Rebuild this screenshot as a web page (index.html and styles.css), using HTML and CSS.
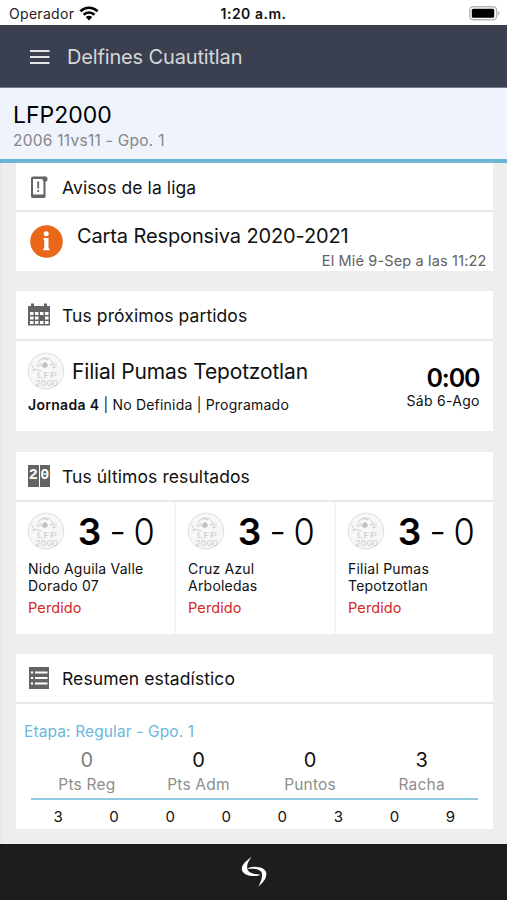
FILE: index.html
```html
<!DOCTYPE html>
<html lang="es">
<head>
<meta charset="utf-8">
<title>Delfines Cuautitlan</title>
<link rel="stylesheet" href="styles.css">
</head>
<body>
<svg width="0" height="0" class="defs" aria-hidden="true">
  <symbol id="crest" viewBox="0 0 38 38">
    <circle cx="19" cy="19" r="17.8" fill="#f7f7f7" stroke="#dedfe0" stroke-width="1"/>
    <g fill="none" stroke="#d2d4d5" stroke-width="1">
      <path d="M11 15a7.500 7.500 0 0 1 15-3l1 3M4 12l3 5 8 2M5 19l4-1M25 16l4-1v-4"/>
      <path d="M14 8l3-2 4 2M12 14l3-2M23 13l3-1" stroke-width="1.4"/>
    </g>
    <path d="M16 11l3-1 2 3-2 3-4-1z" fill="#bfc2c4"/>
  </symbol>
</svg>
<header class="status">
  <span class="carrier">Operador</span>
  <svg class="wifi" width="20" height="15" viewBox="0 0 20 15"><g fill="none" stroke="#000" stroke-width="2.7"><path d="M1.400 5.200a12.400 12.400 0 0 1 17.200 0M4.600 8.700a7.700 7.700 0 0 1 10.800 0"/></g><path d="M6.800 11a4.600 4.600 0 0 1 6.400 0L10 14.400z"/></svg>
  <span class="clock">1:20 a.m.</span>
  <svg class="battery" width="32" height="15" viewBox="0 0 32 15"><rect x=".7" y=".7" width="27" height="13" rx="3.5" fill="#fff" stroke="#b8b8b8" stroke-width="1.4"/><rect x="2.8" y="2.7" width="22.4" height="9" rx="1.5"/><path d="M29 5q3 2.3 0 4.6z" fill="#b8b8b8"/></svg>
</header>
<nav class="bar">
  <svg width="20" height="14" viewBox="0 0 20 14"><path d="M0 1h19.500M0 7h19.500M0 13h19.500" stroke="#e3e4e5" stroke-width="2"/></svg>
  <span class="bar-title">Delfines Cuautitlan</span>
</nav>
<section class="league">
  <h1>LFP2000</h1>
  <p>2006 11vs11 - Gpo. 1</p>
</section>
<main>
  <section class="card notices">
    <div class="card-head">
      <svg class="icon" width="24" height="24" viewBox="0 0 24 24"><path fill="#646464" fill-rule="evenodd" d="M6 1.500h12.500V21.500a1.500 1.500 0 0 1-1.500 1.500H5.500A1.500 1.500 0 0 1 4 21.500V3.500A2 2 0 0 1 6 1.500zM6 4v15.500h10.500V4z"/><circle cx="18" cy="4" r="2.600" fill="#646464"/><path d="M11.200 6.500v7" stroke="#646464" stroke-width="1.800"/><circle cx="11.200" cy="16" r="1.100" fill="#646464"/></svg>
      <h2>Avisos de la liga</h2>
    </div>
    <div class="notice">
      <svg width="33" height="33" viewBox="0 0 33 33"><circle cx="16.500" cy="16.500" r="16.300" fill="#ea6719"/><circle cx="16.200" cy="8.800" r="2.500" fill="#fff"/><path d="M13.500 13h5v10.500h1V25.300h-6.300v-1.800h1v-8.700h-.7z" fill="#fff"/></svg>
      <div class="notice-text">
        <h3>Carta Responsiva 2020-2021</h3>
        <time>El Mié 9-Sep a las 11:22</time>
      </div>
    </div>
  </section>
  <section class="card next">
    <div class="card-head">
      <svg class="icon" width="24" height="24" viewBox="0 0 24 24"><path fill="#646464" d="M1 3h22v19.500H1zM4 .500h3v4H4zM17 .500h3v4h-3z"/><path fill="#fff" d="M3 9h3.500v3H3zM8 9h3.500v3H8zM13 9h3.500v3H13zM18 9h3.500v3H18zM3 13.500h3.500v3H3zM8 13.500h3.500v3H8zM18 13.500h3.500v3H18zM3 18h3.500v3H3zM8 18h3.500v3H8zM13 18h3.500v3H13zM18 18h3.500v3H18z"/></svg>
      <h2>Tus próximos partidos</h2>
    </div>
    <div class="match">
      <div class="match-info">
        <div class="rival"><svg width="38" height="38"><use href="#crest"/><g class="crest-text"><text x="10" y="25.500" textLength="20" lengthAdjust="spacingAndGlyphs">LFP</text><text x="8" y="33.500" textLength="23" lengthAdjust="spacingAndGlyphs">2000</text></g></svg><h3>Filial Pumas Tepotzotlan</h3></div>
        <p><b>Jornada 4</b> | No Definida | Programado</p>
      </div>
      <div class="match-time"><strong>0:00</strong><span>Sáb 6-Ago</span></div>
    </div>
  </section>
  <section class="card results">
    <div class="card-head">
      <span class="icon score-icon"><i>2</i><i>0</i></span>
      <h2>Tus últimos resultados</h2>
    </div>
    <div class="result-row">
      <article class="result"><div class="score"><svg width="38" height="38"><use href="#crest"/><g class="crest-text"><text x="10" y="25.500" textLength="20" lengthAdjust="spacingAndGlyphs">LFP</text><text x="8" y="33.500" textLength="23" lengthAdjust="spacingAndGlyphs">2000</text></g></svg><b>3</b><em>-</em><span>0</span></div><p>Nido Aguila Valle<br>Dorado 07</p><small>Perdido</small></article>
      <article class="result"><div class="score"><svg width="38" height="38"><use href="#crest"/><g class="crest-text"><text x="10" y="25.500" textLength="20" lengthAdjust="spacingAndGlyphs">LFP</text><text x="8" y="33.500" textLength="23" lengthAdjust="spacingAndGlyphs">2000</text></g></svg><b>3</b><em>-</em><span>0</span></div><p>Cruz Azul<br>Arboledas</p><small>Perdido</small></article>
      <article class="result"><div class="score"><svg width="38" height="38"><use href="#crest"/><g class="crest-text"><text x="10" y="25.500" textLength="20" lengthAdjust="spacingAndGlyphs">LFP</text><text x="8" y="33.500" textLength="23" lengthAdjust="spacingAndGlyphs">2000</text></g></svg><b>3</b><em>-</em><span>0</span></div><p>Filial Pumas<br>Tepotzotlan</p><small>Perdido</small></article>
    </div>
  </section>
  <section class="card stats">
    <div class="card-head">
      <svg class="icon" width="24" height="24" viewBox="0 0 24 24"><path fill="#646464" d="M2 1h20v22H2z"/><path stroke="#fff" stroke-width="1.800" d="M3.800 6.500h2.400M8 6.500h12.500M3.800 12h2.400M8 12h12.500M3.800 17.500h2.400M8 17.500h12.500"/></svg>
      <h2>Resumen estadístico</h2>
    </div>
    <h4>Etapa: Regular - Gpo. 1</h4>
    <div class="totals">
      <div class="dim"><b>0</b><span>Pts Reg</span></div>
      <div><b>0</b><span>Pts Adm</span></div>
      <div><b>0</b><span>Puntos</span></div>
      <div><b>3</b><span>Racha</span></div>
    </div>
    <div class="detail"><span>3</span><span>0</span><span>0</span><span>0</span><span>0</span><span>3</span><span>0</span><span>9</span></div>
  </section>
</main>
<footer class="dock">
  <svg width="28" height="34" viewBox="0 0 28 34"><path fill="#fff" d="M11.500 2C6 6 1 10 2 15c.7 3.500 5 5.600 10 6 4 .3 7-.3 8.500-1.500C16 19.500 8 18.500 7.300 13.500 6.500 9.500 8.500 6 11.500 2zM18.500 31.500C24 27 27.500 21.500 26 17 24.800 13.500 20 12 15 11.800c-3.500-.1-6.500.7-7.500 2.300 5-1 14-.5 14.500 5 .3 4.500-1.500 8-3.500 12.400z"/></svg>
</footer>
</body>
</html>
```
FILE: styles.css
```css
* { box-sizing: border-box; margin: 0; padding: 0; }
body { width: 507px; height: 900px; overflow: hidden; display: flex; flex-direction: column; background: #eee; color: #111; font-family: Inter, "Liberation Sans", sans-serif; font-weight: 400; }
svg { display: block; flex: none; }
.defs { position: absolute; }
h1, h2, h3, h4 { font-weight: 400; white-space: nowrap; }
.status { height: 25px; flex: none; background: #fff; display: grid; grid-template-columns: auto 1fr auto; align-items: center; padding: 2px 6px 0 9px; position: relative; }
.carrier { font-size: 14px; letter-spacing: .3px; color: #222; }
.wifi { margin-left: 5px; }
.clock { position: absolute; left: 0; right: 0; top: 5px; text-align: center; font-size: 14px; line-height: 18px; font-weight: 600; letter-spacing: .5px; }
.bar { height: 63px; flex: none; background: #3b4050; border-bottom: 1px solid #737985; display: flex; align-items: center; padding: 1px 0 0 30px; gap: 17px; }
.bar-title { color: #d5d6d9; font-size: 20px; letter-spacing: -.15px; }
.league { height: 75px; flex: none; background: #eff3fb; border-bottom: 4px solid #6ab4d6; padding: 12px 13px 0; }
.league h1 { font-size: 23px; line-height: 30px; color: #000; }
.league p { font-size: 15.500px; line-height: 22px; letter-spacing: .26px; color: #858588; }
main { flex: 1; padding: 0 14.500px 0 16px; box-shadow: inset 3px 0 2px -2px #e5e5e5; }
.card { background: #fff; box-shadow: 0 0 1px #e3e3e3; }
.card-head { height: 50px; border-bottom: 2px solid #e8e8e9; display: flex; align-items: center; gap: 11px; padding-left: 11px; }
.card-head h2 { font-size: 17.500px; line-height: 24px; letter-spacing: .09px; margin-top: 2px; }
.notices { height: 108px; margin-bottom: 20px; }
.notices .card-head { height: 49px; }
.notice { height: 59px; display: flex; padding: 13px 6px 0 14px; gap: 14px; }
.notice-text { flex: 1; display: flex; flex-direction: column; }
.notice h3 { font-size: 20px; line-height: 24px; margin-top: -1px; letter-spacing: -.12px; }
.notice time { align-self: flex-end; font-size: 14.500px; line-height: 18px; letter-spacing: .15px; margin-top: 4px; color: #626262; }
.next { height: 140px; margin-bottom: 21px; }
.match { display: flex; justify-content: space-between; padding: 11px 13px 0 12px; }
.rival { display: flex; align-items: center; gap: 7px; height: 38px; margin-left: -1px; }
.rival h3 { font-size: 21px; letter-spacing: -.17px; }
.match-info p { font-size: 14px; line-height: 20px; letter-spacing: .21px; margin-top: 5px; white-space: nowrap; }
.match-info b { letter-spacing: .3px; font-weight: 600; }
.match-time { display: flex; flex-direction: column; align-items: flex-end; padding-top: 11px; }
.match-time strong { font-size: 25px; line-height: 30px; font-weight: 600; letter-spacing: -1.1px; color: #000; }
.match-time span { font-size: 14px; line-height: 18px; letter-spacing: .3px; margin: -1px -.3px 0 0; }
.results { height: 182px; margin-bottom: 20px; }
.score-icon { width: 24px; height: 24px; padding: 1px; display: flex; gap: 1px; }
.score-icon i { flex: 1; background: #646464; color: #fff; font: 600 15px/22px "Liberation Mono", monospace; text-align: center; }
.result-row { display: grid; grid-template-columns: 160px 160px 1fr; height: 132px; }
.result { padding: 10px 0 0 12px; border-right: 2px solid #f4f4f4; }
.result:last-child { border: 0; }
.score { display: flex; align-items: center; height: 38px; font-size: 37px; line-height: 38px; color: #000; }
.score svg { margin-left: -1px; }
.score b { width: 23px; margin-left: 13px; font-weight: 600; display: flex; justify-content: center; }
.score em { width: 33px; font-style: normal; font-weight: 300; text-align: center; transform: translateY(1px); }
.score span { width: 20px; font-weight: 300; display: flex; justify-content: center; transform: scaleX(.93); }
.score b, .score span { padding-top: 1px; }
.result p { margin-top: 10px; font-size: 14px; line-height: 17px; letter-spacing: .22px; white-space: nowrap; }
.result small { display: block; margin-top: 5px; font-size: 14.500px; line-height: 18px; letter-spacing: .12px; color: #d12a2a; }
.crest-text { font: 400 7px Inter, sans-serif; fill: #c6c8c9; }
.stats { height: 175px; }
.stats h4 { font-size: 15.500px; line-height: 20px; letter-spacing: .12px; margin: 18px 0 0 8px; color: #6bb7de; }
.totals { display: grid; grid-template-columns: repeat(4, 1fr); margin: 5px 15px 0; padding-bottom: 2px; border-bottom: 2px solid #8fc9e2; text-align: center; }
.totals b { display: block; font-size: 20px; line-height: 27px; font-weight: 400; }
.totals span { display: block; font-size: 15.500px; line-height: 22px; letter-spacing: .2px; color: #8e8e8e; }
.totals .dim b { color: #7d7d7d; }
.detail { display: grid; grid-template-columns: repeat(8, 1fr); margin: 7px 14px 0; text-align: center; font-size: 15px; line-height: 20px; }
.dock { height: 56px; flex: none; background: #1d1d1d; display: flex; justify-content: center; align-items: center; }
```
